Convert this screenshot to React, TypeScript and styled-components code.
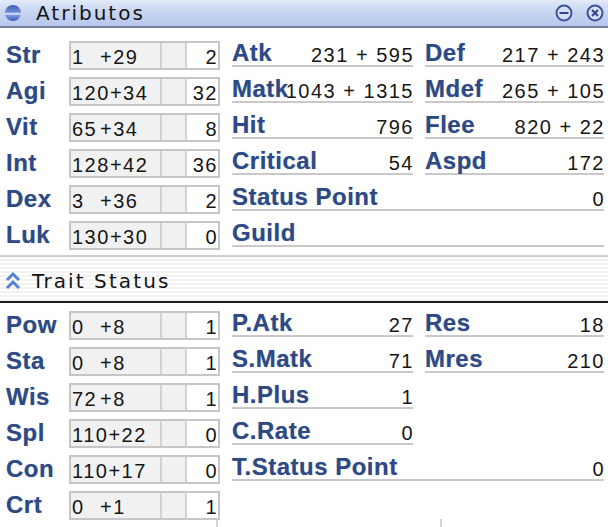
import React from 'react';
import styled, { createGlobalStyle } from 'styled-components';

const GlobalStyle = createGlobalStyle`
  html, body {
    margin: 0;
    padding: 0;
    background: #ffffff;
  }
`;

const LABEL_BLUE = '#2e4984';
const LINE_GRAY = '#c9c9c9';

const Window = styled.div`
  width: 608px;
  height: 527px;
  overflow: hidden;
  background: #ffffff;
  font-family: 'Liberation Sans', Arial, sans-serif;
`;

const TitleBar = styled.div`
  display: flex;
  align-items: center;
  height: 26px;
  padding: 0 4px 0 4px;
  background: linear-gradient(#e3eaf8 0%, #c9d6f1 45%, #b6c7ec 100%);
  border-bottom: 2px solid #76819a;
`;

const Title = styled.span`
  margin-left: 14px;
  font-family: 'DejaVu Sans', sans-serif;
  font-size: 20px;
  letter-spacing: 2px;
  color: #141414;
  line-height: 1;
`;

const TitleButtons = styled.div`
  margin-left: auto;
  display: flex;
  gap: 13px;
  align-items: center;
`;

const Section = styled.div<{ $top: number }>`
  padding-top: ${p => p.$top}px;
`;

const Row = styled.div`
  display: grid;
  grid-template-columns: 51px 151px 181px 179px;
  column-gap: 12px;
  padding-left: 6px;
  height: 36px;
  align-items: start;
`;

const Label = styled.div`
  height: 29px;
  display: flex;
  align-items: flex-end;
  font-weight: bold;
  font-size: 24px;
  letter-spacing: 0.5px;
  line-height: 1;
  color: ${LABEL_BLUE};
  text-shadow: 0 0 1px rgba(46, 73, 132, 0.45);
  white-space: nowrap;
`;

const StatBox = styled.div`
  box-sizing: border-box;
  margin-top: 3px;
  height: 29px;
  display: grid;
  grid-template-columns: 89px 25px 1fr;
  border: 2px solid #c6c6c6;
  font-size: 20px;
  letter-spacing: 1.5px;
  color: #161616;
`;

const BoxCell = styled.div<{ $white?: boolean; $first?: boolean }>`
  box-sizing: border-box;
  display: flex;
  align-items: flex-end;
  justify-content: ${p => (p.$white ? 'flex-end' : 'flex-start')};
  padding: 0 0 1px 1px;
  line-height: 1;
  background: ${p => (p.$white ? '#ffffff' : '#f1f1f1')};
  border-left: ${p => (p.$first ? 'none' : '2px solid #d2d2d2')};
  white-space: nowrap;
  overflow: hidden;
`;

const Base = styled.span`
  display: inline-block;
  min-width: 28px;
`;

const StatCell = styled.div<{ $wide?: boolean }>`
  box-sizing: border-box;
  height: 29px;
  display: grid;
  align-items: end;
  grid-column: ${p => (p.$wide ? '3 / 5' : 'auto')};
  border-bottom: 2px solid ${LINE_GRAY};
  line-height: 1;
  & > * {
    grid-area: 1 / 1;
  }
`;

const Value = styled.span`
  justify-self: end;
  font-size: 20px;
  letter-spacing: 1.5px;
  margin-right: -1px;
  color: #161616;
  white-space: nowrap;
`;

const StatLabel = styled(Label)`
  height: auto;
  display: block;
`;

const SectionHeader = styled.div`
  margin-top: 1px;
  height: 48px;
  display: flex;
  align-items: center;
  padding: 4px 0 0 5px;
  box-sizing: border-box;
  border-top: 2px solid #cfcfcf;
  border-bottom: 2px solid #1c1c1c;
  background: repeating-linear-gradient(180deg, #ffffff 0 2px, #f2f2f2 2px 4px);
`;

const HeaderTitle = styled(Title)`
  margin-left: 11px;
  letter-spacing: 2.1px;
`;

const Footer = styled.div`
  display: flex;
  margin-top: -5px;
  padding-left: 216px;
  height: 8px;
`;

const Tick = styled.div<{ $offset?: number }>`
  width: 2px;
  height: 8px;
  margin-left: ${p => p.$offset ?? 0}px;
  background: #d3d3d3;
`;

type Stat = { label: string; value?: string };

type Line = {
  label: string;
  base: string;
  bonus: string;
  cost: string;
  mid?: Stat;
  right?: Stat;
  wide?: Stat;
};

const attributes: Line[] = [
  { label: 'Str', base: '1', bonus: '+29', cost: '2', mid: { label: 'Atk', value: '231 + 595' }, right: { label: 'Def', value: '217 + 243' } },
  { label: 'Agi', base: '120', bonus: '+34', cost: '32', mid: { label: 'Matk', value: '1043 + 1315' }, right: { label: 'Mdef', value: '265 + 105' } },
  { label: 'Vit', base: '65', bonus: '+34', cost: '8', mid: { label: 'Hit', value: '796' }, right: { label: 'Flee', value: '820 + 22' } },
  { label: 'Int', base: '128', bonus: '+42', cost: '36', mid: { label: 'Critical', value: '54' }, right: { label: 'Aspd', value: '172' } },
  { label: 'Dex', base: '3', bonus: '+36', cost: '2', wide: { label: 'Status Point', value: '0' } },
  { label: 'Luk', base: '130', bonus: '+30', cost: '0', wide: { label: 'Guild' } },
];

const traits: Line[] = [
  { label: 'Pow', base: '0', bonus: '+8', cost: '1', mid: { label: 'P.Atk', value: '27' }, right: { label: 'Res', value: '18' } },
  { label: 'Sta', base: '0', bonus: '+8', cost: '1', mid: { label: 'S.Matk', value: '71' }, right: { label: 'Mres', value: '210' } },
  { label: 'Wis', base: '72', bonus: '+8', cost: '1', mid: { label: 'H.Plus', value: '1' } },
  { label: 'Spl', base: '110', bonus: '+22', cost: '0', mid: { label: 'C.Rate', value: '0' } },
  { label: 'Con', base: '110', bonus: '+17', cost: '0', wide: { label: 'T.Status Point', value: '0' } },
  { label: 'Crt', base: '0', bonus: '+1', cost: '1' },
];

const StatField: React.FC<{ stat: Stat; wide?: boolean }> = ({ stat, wide }) => (
  <StatCell $wide={wide}>
    <StatLabel>{stat.label}</StatLabel>
    {stat.value !== undefined && <Value>{stat.value}</Value>}
  </StatCell>
);

const StatRow: React.FC<{ line: Line }> = ({ line }) => (
  <Row>
    <Label>{line.label}</Label>
    <StatBox>
      <BoxCell $first>
        <Base>{line.base}</Base>
        <span>{line.bonus}</span>
      </BoxCell>
      <BoxCell />
      <BoxCell $white>{line.cost}</BoxCell>
    </StatBox>
    {line.mid && <StatField stat={line.mid} />}
    {line.right && <StatField stat={line.right} />}
    {line.wide && <StatField stat={line.wide} wide />}
  </Row>
);

const SphereIcon = () => (
  <svg width="18" height="18" viewBox="0 0 18 18">
    <defs>
      <linearGradient id="sph" x1="0" y1="0" x2="0" y2="1">
        <stop offset="0" stopColor="#3e5fb8" />
        <stop offset="0.45" stopColor="#6f8ad4" />
        <stop offset="0.55" stopColor="#e8eefc" />
        <stop offset="0.65" stopColor="#7c96da" />
        <stop offset="1" stopColor="#3a5ab2" />
      </linearGradient>
    </defs>
    <circle cx="9" cy="9" r="8" fill="url(#sph)" />
  </svg>
);

const RoundButton: React.FC<{ kind: 'min' | 'close' }> = ({ kind }) => (
  <svg width="18" height="18" viewBox="0 0 18 18">
    <circle cx="9" cy="9" r="7.5" fill="#d7e0f5" stroke="#3b5499" strokeWidth="2" />
    {kind === 'min' ? (
      <line x1="4.5" y1="9" x2="13.5" y2="9" stroke="#2c4488" strokeWidth="2" />
    ) : (
      <path d="M6 6 L12 12 M12 6 L6 12" stroke="#2c4488" strokeWidth="2" />
    )}
  </svg>
);

const ChevronsUp = () => (
  <svg width="16" height="20" viewBox="0 0 16 20">
    <path d="M2 9 L8 3 L14 9 M2 17 L8 11 L14 17" fill="none" stroke="#5283d6" strokeWidth="3" />
  </svg>
);

const App: React.FC = () => (
  <>
    <GlobalStyle />
    <Window>
      <TitleBar>
        <SphereIcon />
        <Title>Atributos</Title>
        <TitleButtons>
          <RoundButton kind="min" />
          <RoundButton kind="close" />
        </TitleButtons>
      </TitleBar>
      <Section $top={10}>
        {attributes.map(line => <StatRow key={line.label} line={line} />)}
      </Section>
      <SectionHeader>
        <ChevronsUp />
        <HeaderTitle>Trait Status</HeaderTitle>
      </SectionHeader>
      <Section $top={5}>
        {traits.map(line => <StatRow key={line.label} line={line} />)}
      </Section>
      <Footer>
        <Tick />
        <Tick $offset={222} />
      </Footer>
    </Window>
  </>
);

export default App;
